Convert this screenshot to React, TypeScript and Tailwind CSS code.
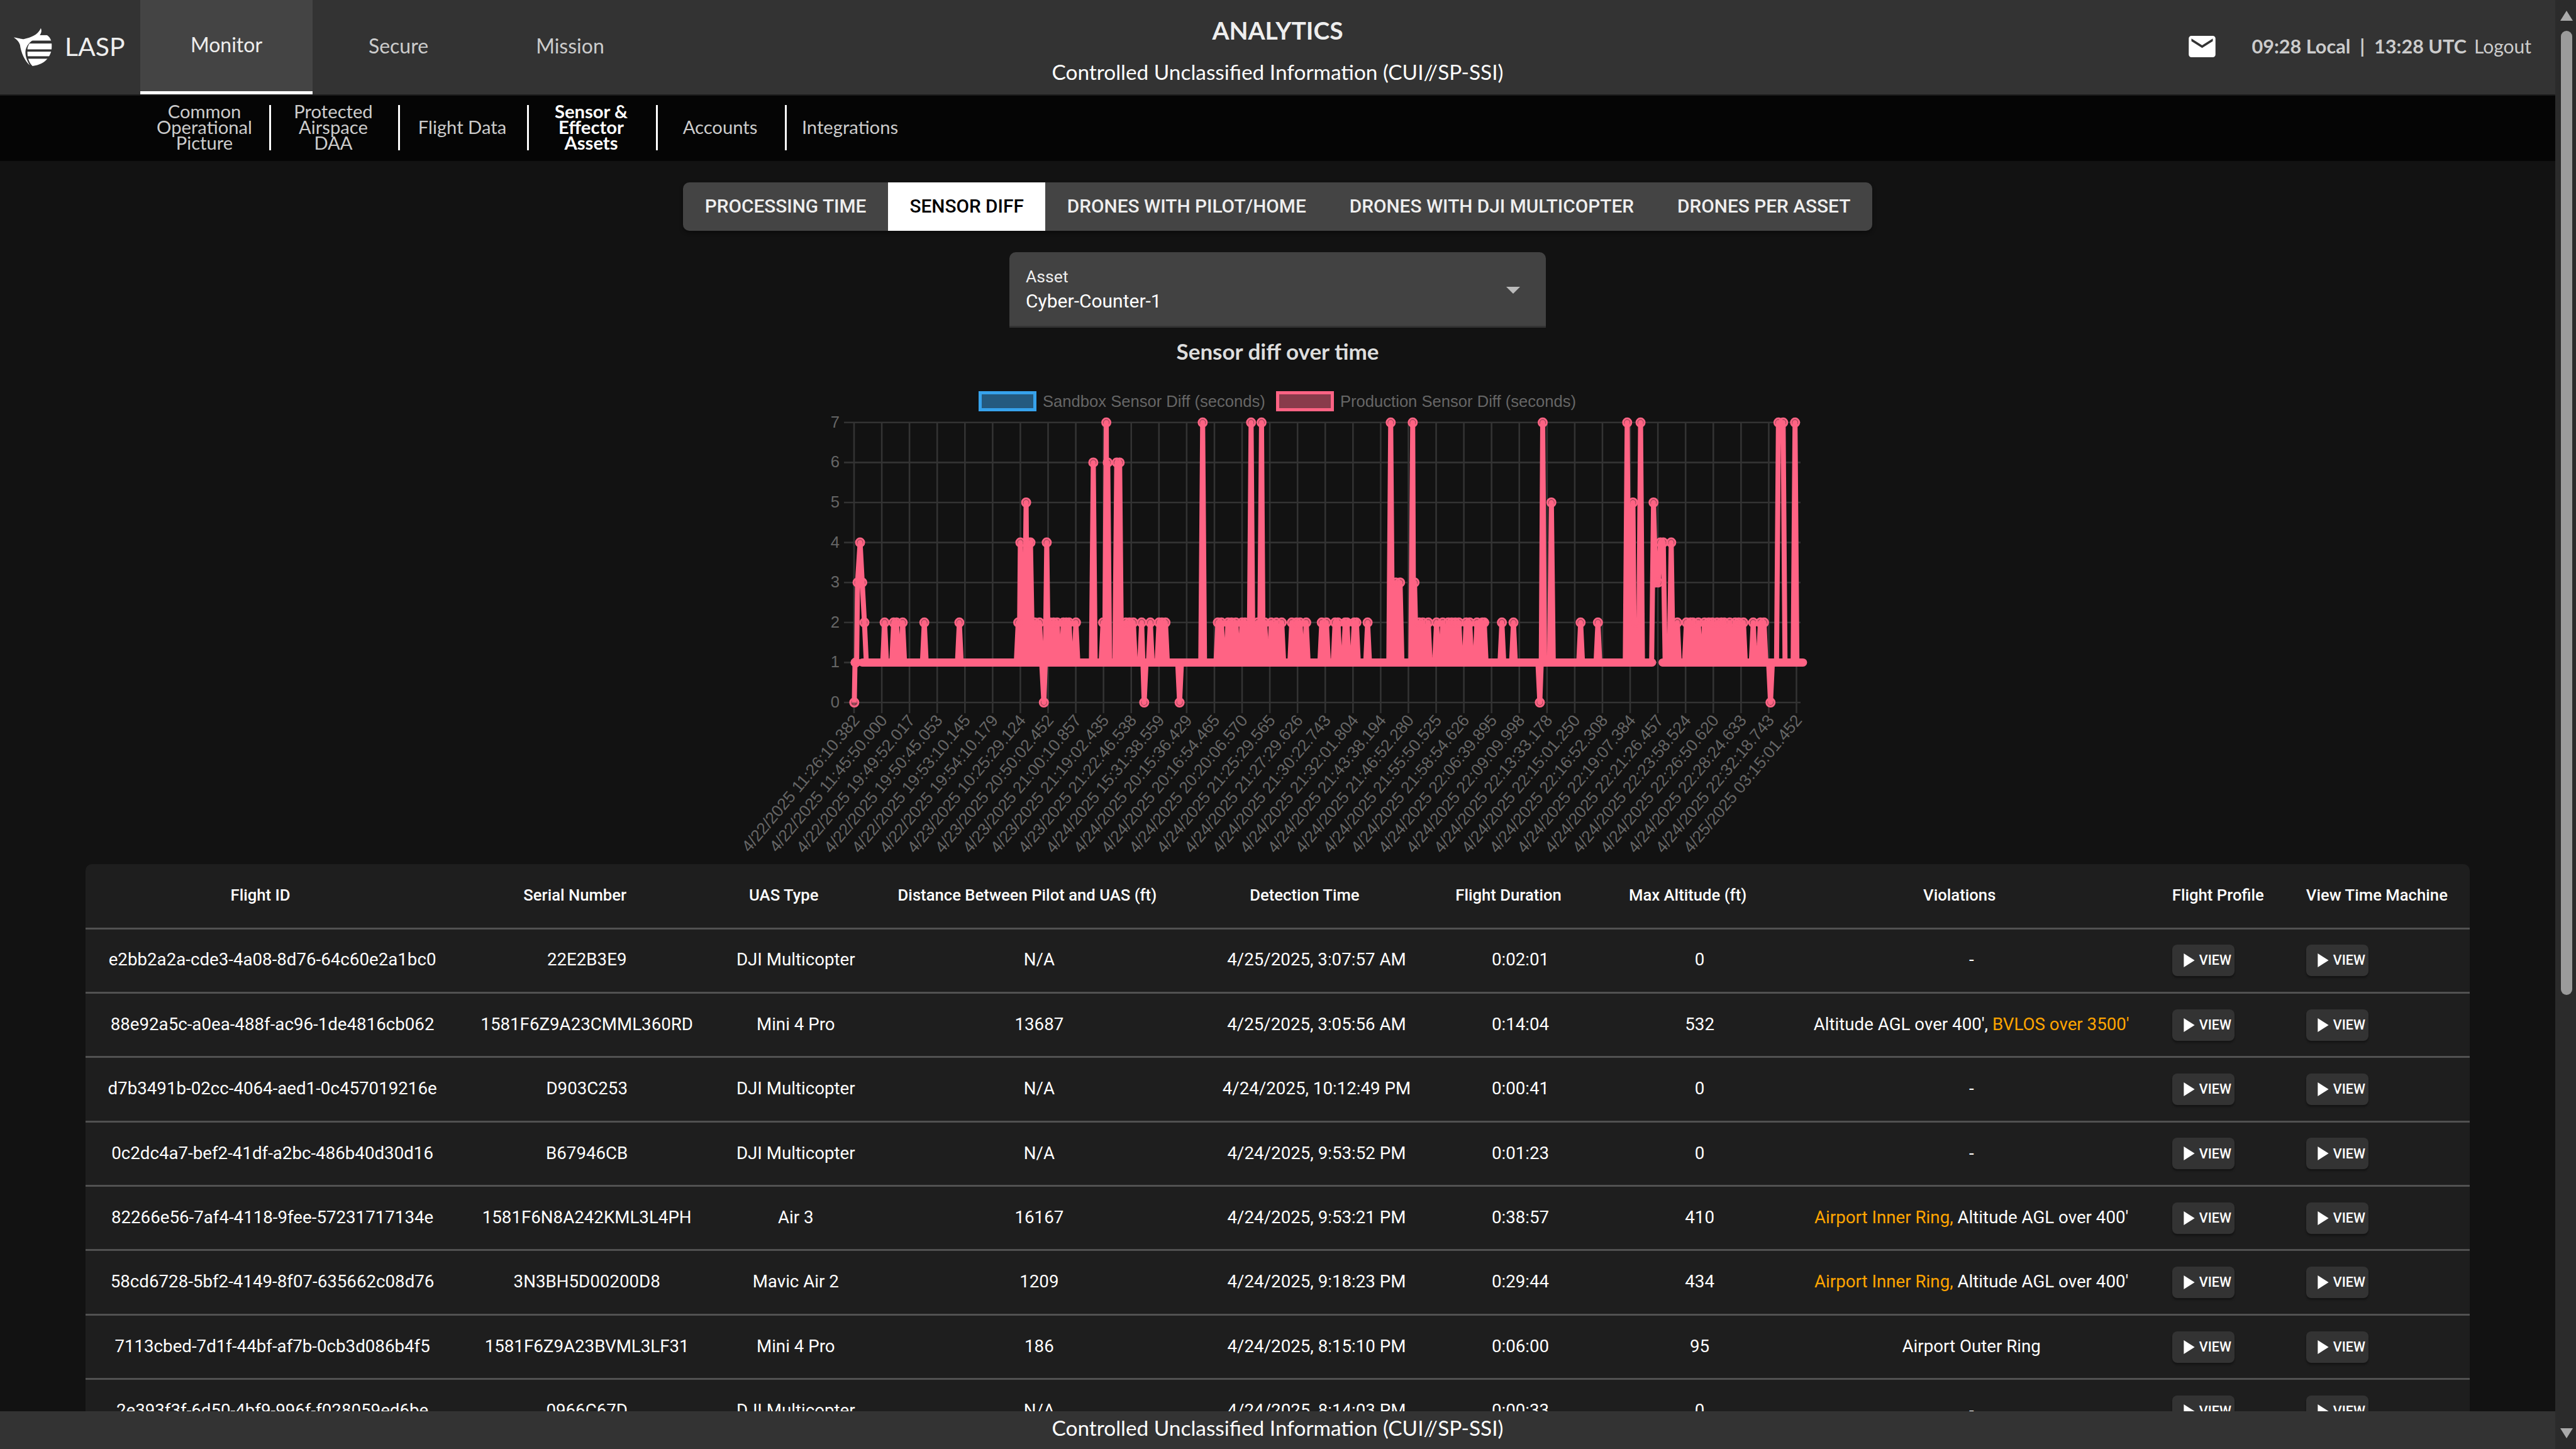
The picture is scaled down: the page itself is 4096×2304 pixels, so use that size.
import React from "react";

const L = (z: number) => 1150 + z / 1.742;
const R = (z: number) => 2050 + z / 1.742;
const Y = (v: number) => 1117 - v * 63.6;

const spikes: [number, number][] = [
  ...([
    [363, 0], [367, 1], [372, 3], [379, 4], [385, 3], [391, 2], [447, 2], [472, 2], [480, 2], [497, 2], [557, 2], [654, 2],
    [817, 2], [823, 4], [839, 5], [845, 4], [851, 4], [863, 2], [876, 2], [888, 0], [896, 4], [905, 2], [915, 2], [925, 2],
    [942, 2], [950, 2], [958, 2], [977, 2], [1025, 6], [1052, 2], [1061, 7], [1065, 6], [1090, 6], [1098, 6], [1115, 2],
    [1125, 2], [1136, 2], [1159, 2], [1166, 0], [1183, 2], [1207, 2], [1215, 2], [1225, 2], [1264, 0], [1328, 7], [1370, 2],
    [1380, 2], [1398, 2], [1408, 2], [1420, 2], [1437, 2], [1445, 2], [1462, 7], [1480, 2], [1491, 7], [1500, 2], [1518, 2],
    [1532, 2], [1547, 2],
  ] as [number, number][]).map(([z, v]) => [L(z), v] as [number, number]),
  ...([
    [7, 2], [20, 2], [30, 2], [47, 2], [90, 2], [103, 2], [127, 2], [135, 2], [155, 2], [160, 2], [180, 2], [186, 2], [217, 2],
    [281, 7], [295, 3], [307, 3], [342, 7], [347, 3], [360, 2], [370, 2], [385, 2], [408, 2], [425, 2],
    [440, 2], [450, 2], [460, 2], [470, 2], [490, 2], [500, 2], [520, 2], [535, 2], [540, 2], [589, 2], [621, 2],
    [694, 0], [702, 7], [726, 5], [807, 2], [855, 2], [936, 7], [952, 5], [960, 2], [973, 7], [1009, 5], [1015, 3], [1022, 3],
    [1028, 4], [1036, 4], [1058, 4], [1075, 2], [1100, 2], [1112, 2], [1118, 2], [1133, 2], [1150, 2], [1162, 2], [1172, 2],
    [1185, 2], [1197, 2], [1205, 2], [1220, 2], [1235, 2], [1245, 2], [1258, 2], [1285, 2], [1305, 2], [1315, 2], [1333, 0],
    [1355, 7], [1368, 7], [1401, 7],
  ] as [number, number][]).map(([z, v]) => [R(z), v] as [number, number]),
];

const BASE = 3;
const linePoints = (() => {
  const pts: string[] = [];
  spikes.forEach(([x, v], i) => {
    pts.push(`${x.toFixed(1)},${Y(v).toFixed(1)}`);
    const next = spikes[i + 1];
    if (!next) return;
    const connected = (x > L(367) && x < L(391)) || (x >= R(1009) && x < R(1036)) || x === R(1355);
    if (connected) return;
    const gap = next[0] - x;
    if (gap > BASE * 2 + 1) {
      pts.push(`${(x + BASE).toFixed(1)},${Y(1).toFixed(1)}`);
      pts.push(`${(next[0] - BASE).toFixed(1)},${Y(1).toFixed(1)}`);
    } else {
      pts.push(`${(x + gap / 2).toFixed(1)},${Y(1).toFixed(1)}`);
    }
  });
  const last = spikes[spikes.length - 1][0];
  pts.push(`${(last + BASE).toFixed(1)},${Y(1).toFixed(1)}`);
  pts.push(`${R(1417).toFixed(1)},${Y(1).toFixed(1)}`);
  return pts.join(" ");
})();

const xLabels = [
  "4/22/2025 11:26:10.382", "4/22/2025 11:45:50.000", "4/22/2025 19:49:52.017", "4/22/2025 19:50:45.053", "4/22/2025 19:53:10.145",
  "4/22/2025 19:54:10.179", "4/23/2025 10:25:29.124", "4/23/2025 20:50:02.452", "4/23/2025 21:00:10.857", "4/23/2025 21:19:02.435",
  "4/23/2025 21:22:46.538", "4/24/2025 15:31:38.559", "4/24/2025 20:15:36.429", "4/24/2025 20:16:54.465", "4/24/2025 20:20:06.570",
  "4/24/2025 21:25:29.565", "4/24/2025 21:27:29.626", "4/24/2025 21:30:22.743", "4/24/2025 21:32:01.804", "4/24/2025 21:43:38.194",
  "4/24/2025 21:46:52.280", "4/24/2025 21:55:50.525", "4/24/2025 21:58:54.626", "4/24/2025 22:06:39.895", "4/24/2025 22:09:09.998",
  "4/24/2025 22:13:33.178", "4/24/2025 22:15:01.250", "4/24/2025 22:16:52.308", "4/24/2025 22:19:07.384", "4/24/2025 22:21:26.457",
  "4/24/2025 22:23:58.524", "4/24/2025 22:26:50.620", "4/24/2025 22:28:24.633", "4/24/2025 22:32:18.743", "4/25/2025 03:15:01.452",
];

const X0 = 1358;
const STEP = (2856.5 - 1358) / 34;

function Chart() {
  return (
    <svg viewBox="1172 600 1720 774" className="block w-[1720px] h-[774px] shrink-0 font-['Liberation_Sans',sans-serif]">
      <rect x="1558.5" y="624.5" width="87" height="27" fill="rgba(54,162,235,0.5)" stroke="#36a2eb" strokeWidth="5" />
      <text x="1658" y="647" fontSize="25.6" fill="#666">Sandbox Sensor Diff (seconds)</text>
      <rect x="2031.5" y="624.5" width="87" height="27" fill="rgba(255,99,132,0.5)" stroke="#ff6384" strokeWidth="5" />
      <text x="2131" y="647" fontSize="25.6" fill="#666">Production Sensor Diff (seconds)</text>
      {[0, 1, 2, 3, 4, 5, 6, 7].map((v) => (
        <g key={v}>
          <line x1="1342" x2="2863" y1={Y(v)} y2={Y(v)} stroke="#333" strokeWidth="2.6" />
          <text x="1335" y={Y(v) + 8} fontSize="25.6" fill="#666" textAnchor="end">{v}</text>
        </g>
      ))}
      {xLabels.map((t, i) => {
        const x = X0 + i * STEP;
        return (
          <g key={t}>
            <line x1={x} x2={x} y1="672" y2="1134" stroke="#333" strokeWidth="2.6" />
            <text transform={`translate(${x + 10} 1146) rotate(-50)`} fontSize="26.2" fill="#666" textAnchor="end">{t}</text>
          </g>
        );
      })}
      <polyline points={linePoints} fill="none" stroke="#ff6384" strokeWidth="8" strokeLinejoin="round" />
      <line x1={L(385)} x2={R(1005)} y1={Y(1)} y2={Y(1)} stroke="#ff6384" strokeWidth="13" strokeLinecap="round" />
      <line x1={R(1034)} x2={R(1423)} y1={Y(1)} y2={Y(1)} stroke="#ff6384" strokeWidth="13" strokeLinecap="round" />
      <circle cx={L(363)} cy={Y(1)} r="6" fill="#ff6384" />
      {spikes.map(([x, v], i) => (
        <circle key={i} cx={x} cy={Y(v)} r="6.5" fill="rgba(255,99,132,0.5)" stroke="#ff6384" strokeWidth="3" />
      ))}
    </svg>
  );
}

function Logo() {
  return (
    <svg viewBox="30 35 195 190" className="w-[65px] h-[63px] shrink-0">
      <defs>
        <clipPath id="lasp-body">
          <path d="M172 65C200 70 218 90 218 125C218 170 190 215 125 222C105 205 98 170 100 140C105 110 130 85 172 65Z" />
        </clipPath>
      </defs>
      <path fill="#fff" d="M35 85C60 88 75 95 85 92C115 85 150 75 165 40C172 55 165 72 150 85C120 100 100 115 92 145C88 170 98 195 112 218C90 200 70 160 65 120C60 105 50 95 35 85Z" />
      <g clipPath="url(#lasp-body)" fill="#fff">
        <rect x="100" y="74" width="120" height="26" />
        <rect x="100" y="114" width="120" height="28" />
        <rect x="100" y="153" width="120" height="22" />
        <rect x="100" y="187" width="120" height="38" />
      </g>
    </svg>
  );
}

type Cell = React.ReactNode;
const Orange = ({ children }: { children: React.ReactNode }) => <span className="text-[#ffa500]">{children}</span>;

const rows: Cell[][] = [
  ["e2bb2a2a-cde3-4a08-8d76-64c60e2a1bc0", "22E2B3E9", "DJI Multicopter", "N/A", "4/25/2025, 3:07:57 AM", "0:02:01", "0", "-"],
  ["88e92a5c-a0ea-488f-ac96-1de4816cb062", "1581F6Z9A23CMML360RD", "Mini 4 Pro", "13687", "4/25/2025, 3:05:56 AM", "0:14:04", "532", <>Altitude AGL over 400', <Orange>BVLOS over 3500'</Orange></>],
  ["d7b3491b-02cc-4064-aed1-0c457019216e", "D903C253", "DJI Multicopter", "N/A", "4/24/2025, 10:12:49 PM", "0:00:41", "0", "-"],
  ["0c2dc4a7-bef2-41df-a2bc-486b40d30d16", "B67946CB", "DJI Multicopter", "N/A", "4/24/2025, 9:53:52 PM", "0:01:23", "0", "-"],
  ["82266e56-7af4-4118-9fee-57231717134e", "1581F6N8A242KML3L4PH", "Air 3", "16167", "4/24/2025, 9:53:21 PM", "0:38:57", "410", <><Orange>Airport Inner Ring,</Orange> Altitude AGL over 400'</>],
  ["58cd6728-5bf2-4149-8f07-635662c08d76", "3N3BH5D00200D8", "Mavic Air 2", "1209", "4/24/2025, 9:18:23 PM", "0:29:44", "434", <><Orange>Airport Inner Ring,</Orange> Altitude AGL over 400'</>],
  ["7113cbed-7d1f-44bf-af7b-0cb3d086b4f5", "1581F6Z9A23BVML3LF31", "Mini 4 Pro", "186", "4/24/2025, 8:15:10 PM", "0:06:00", "95", "Airport Outer Ring"],
  ["2e393f3f-6d50-4bf9-996f-f028059ed6be", "0966C67D", "DJI Multicopter", "N/A", "4/24/2025, 8:14:03 PM", "0:00:33", "0", "-"],
];

const headers = ["Flight ID", "Serial Number", "UAS Type", "Distance Between Pilot and UAS (ft)", "Detection Time", "Flight Duration", "Max Altitude (ft)", "Violations"];

function ViewButton() {
  return (
    <span className="inline-flex items-center w-[99px] h-[50px] rounded-[8px] bg-[#333] shadow-[0_3px_3px_rgba(0,0,0,0.35)] pl-[18px] gap-[7px] text-white text-[21.5px] font-medium leading-none">
      <svg viewBox="8 5 11 14" className="w-[18px] h-[22px] shrink-0" fill="#fff"><path d="M8 5v14l11-7z" /></svg>
      VIEW
    </span>
  );
}

const tabs = ["PROCESSING TIME", "SENSOR DIFF", "DRONES WITH PILOT/HOME", "DRONES WITH DJI MULTICOPTER", "DRONES PER ASSET"];
const subnav = [
  { t: "Common Operational Picture" },
  { t: "Protected Airspace DAA" },
  { t: "Flight Data" },
  { t: "Sensor & Effector Assets", active: true },
  { t: "Accounts" },
  { t: "Integrations", last: true },
];

export default function App() {
  return (
    <div className="flex h-screen w-full overflow-hidden bg-[#121212] font-['Lato',sans-serif]">
      <div className="flex min-w-0 flex-1 flex-col">
        <header className="grid h-[152px] shrink-0 grid-cols-[1fr_auto_1fr] bg-[#333] border-b-[2px] border-[#1c1c1c]">
          <div className="flex items-stretch">
            <div className="flex w-[223px] items-center pl-[20px] pb-[2px] gap-[18px] text-[41px] leading-none text-[#eee]">
              <Logo />
              <span className="mb-[2px]">LASP</span>
            </div>
            <div className="flex w-[274px] items-center justify-center border-b-[5px] border-white bg-[#444] pb-[4px] text-[32px] text-[#eee]">Monitor</div>
            <div className="flex w-[273px] items-center justify-center pb-[4px] text-[32px] text-[#ccc]">Secure</div>
            <div className="flex w-[273px] items-center justify-center pb-[4px] text-[32px] text-[#ccc]">Mission</div>
          </div>
          <div className="flex flex-col items-center pt-[18px] text-center text-white">
            <div className="h-[60px] text-[39px] font-bold leading-[60px] text-[#eee]">ANALYTICS</div>
            <div className="mt-[11px] h-[50px] text-[33.4px] leading-[50px]">Controlled Unclassified Information (CUI//SP-SSI)</div>
          </div>
          <div className="flex items-center justify-end pr-[38px] pb-[3px] text-[30.6px] text-[#ccc]">
            <svg viewBox="2 4 20 16" className="mr-[57px] h-[34px] w-[43px] shrink-0" fill="#fff">
              <path d="M20 4H4c-1.1 0-1.99.9-1.99 2L2 18c0 1.1.9 2 2 2h16c1.1 0 2-.9 2-2V6c0-1.1-.9-2-2-2zm0 4l-8 5-8-5V6l8 5 8-5v2z" />
            </svg>
            <span className="font-bold whitespace-pre">09:28 Local  |  13:28 UTC</span>
            <span className="ml-[12px] text-[30px]">Logout</span>
          </div>
        </header>

        <nav className="flex h-[104px] shrink-0 items-center bg-[#050505] pb-[2px] pl-[226px]">
          {subnav.map((s) => (
            <div
              key={s.t}
              className={`flex h-[72px] w-[205px] items-center justify-center pb-[4px] pl-[20px] pr-[24px] text-center text-[29.2px] leading-[25px] ${s.last ? "whitespace-nowrap" : "border-r-[3px] border-white"} ${s.active ? "font-bold text-white" : "text-[#ccc]"}`}
            >
              {s.t}
            </div>
          ))}
        </nav>

        <main className="flex min-h-0 flex-1 flex-col items-center overflow-hidden pt-[34px] font-['Roboto',sans-serif]">
          <div className="flex h-[77px] shrink-0 items-stretch overflow-hidden rounded-[10px] bg-[#444] shadow-[0_3px_6px_rgba(0,0,0,0.4)]">
            {tabs.map((t, i) => (
              <div key={t} className={`flex items-center px-[34.5px] text-[29.8px] font-medium whitespace-nowrap ${i === 1 ? "bg-white text-black" : "text-[#eee]"}`}>
                {t}
              </div>
            ))}
          </div>

          <div className="relative mt-[34px] flex h-[120px] w-[853px] shrink-0 flex-col justify-center rounded-t-[10px] border-b-[3px] border-[#333] bg-[#424242] pl-[26px] text-[#eee]">
            <div className="text-[26.6px] leading-[34px]">Asset</div>
            <div className="mt-[4px] text-[30px] leading-[36px] text-white">Cyber-Counter-1</div>
            <div className="absolute right-[41px] top-[55px] h-0 w-0 border-x-[11px] border-t-[11px] border-x-transparent border-t-[#bbb]" />
          </div>

          <div className="flex h-[79px] shrink-0 items-center pb-[4px] font-['Lato',sans-serif] text-[35px] font-bold text-[#ddd]">Sensor diff over time</div>

          <Chart />

          <div className="w-full shrink-0 px-[136px]">
            <table className="w-full table-fixed rounded-t-[10px] bg-[#1e1e1e] text-[27.7px] leading-none text-white">
              <colgroup>
                <col className="w-[590px]" />
                <col className="w-[414px]" />
                <col className="w-[250px]" />
                <col className="w-[524px]" />
                <col className="w-[358px]" />
                <col className="w-[290px]" />
                <col className="w-[280px]" />
                <col className="w-[584px]" />
                <col className="w-[213px]" />
                <col className="w-[287px]" />
              </colgroup>
              <thead>
                <tr className="h-[102px] border-b-[3px] border-[#515151]">
                  {headers.map((h, j) => (
                    <th key={h} className={`text-center text-[25.7px] font-medium whitespace-nowrap ${j === 0 ? "pl-[4px]" : ""}`}>
                      <span className="pr-[38px]">{h}</span>
                    </th>
                  ))}
                  <th className="pl-[27px] text-left text-[25.7px] font-medium whitespace-nowrap">Flight Profile</th>
                  <th className="pl-[27px] text-left text-[25.7px] font-medium whitespace-nowrap">View Time Machine</th>
                </tr>
              </thead>
              <tbody>
                {rows.map((r, i) => (
                  <tr key={i} className="h-[102.4px] border-b-[3px] border-[#515151]">
                    {r.map((c, j) => (
                      <td key={j} className={`pb-[2px] text-center whitespace-nowrap ${j === 0 ? "pl-[4px]" : ""}`}>{c}</td>
                    ))}
                    <td className="pl-[27px]"><ViewButton /></td>
                    <td className="pl-[27px]"><ViewButton /></td>
                  </tr>
                ))}
              </tbody>
            </table>
          </div>
        </main>

        <footer className="flex h-[60px] shrink-0 items-start justify-center bg-[#333] text-[33.4px] leading-[52px] text-white">
          Controlled Unclassified Information (CUI//SP-SSI)
        </footer>
      </div>

      <aside className="flex w-[33px] shrink-0 flex-col items-center bg-[#2b2b2b] pl-[2px]">
        <div className="mt-[17px] h-0 w-0 border-x-[10px] border-b-[16px] border-x-transparent border-b-[#aaa]" />
        <div className="mt-[16px] h-[1533px] w-[18px] rounded-full bg-[#9b9b9b]" />
        <div className="mt-auto mb-[17px] h-0 w-0 border-x-[10px] border-t-[16px] border-x-transparent border-t-[#aaa]" />
      </aside>
    </div>
  );
}
